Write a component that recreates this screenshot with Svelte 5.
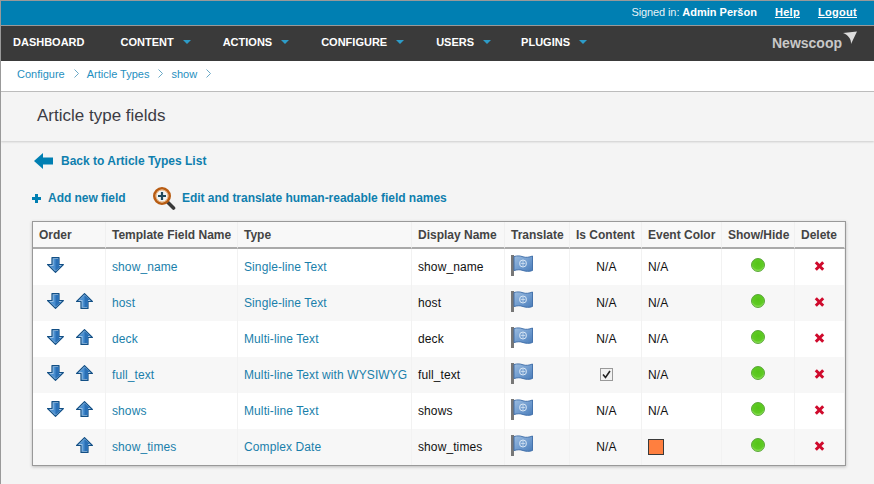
<script>
  const menuItems = [
    { label: 'DASHBOARD', arrow: false },
    { label: 'CONTENT', arrow: true },
    { label: 'ACTIONS', arrow: true },
    { label: 'CONFIGURE', arrow: true },
    { label: 'USERS', arrow: true },
    { label: 'PLUGINS', arrow: true }
  ];

  const crumbs = ['Configure', 'Article Types', 'show'];

  const columns = [
    { label: 'Order', width: 73 },
    { label: 'Template Field Name', width: 132 },
    { label: 'Type', width: 174 },
    { label: 'Display Name', width: 93 },
    { label: 'Translate', width: 65 },
    { label: 'Is Content', width: 72 },
    { label: 'Event Color', width: 80 },
    { label: 'Show/Hide', width: 73 },
    { label: 'Delete', width: 50 }
  ];

  const fields = [
    { name: 'show_name', type: 'Single-line Text', down: true, up: false },
    { name: 'host', type: 'Single-line Text', down: true, up: true },
    { name: 'deck', type: 'Multi-line Text', down: true, up: true },
    { name: 'full_text', type: 'Multi-line Text with WYSIWYG', down: true, up: true, checked: true },
    { name: 'shows', type: 'Multi-line Text', down: true, up: true },
    { name: 'show_times', type: 'Complex Date', down: false, up: true, color: '#ff7f3f' }
  ];
</script>

{#snippet arrow(direction)}
  <svg class="arrow" class:flip={direction === 'up'} width="17" height="16" viewBox="0 0 17 16">
    <path d="M5 .6h7v6.900h4.400L8.500 15.400.6 7.500H5z" fill="#9cc2e6" stroke="#124f85" stroke-width="1.200" stroke-linejoin="round" />
    <path d="M6.500 2h5.500v7h2L8.500 13.800 3.500 9h3z" fill="#4a8fd0" />
    <path d="M8.500 2H12v7h2L8.500 13.800z" fill="#2a70b6" />
  </svg>
{/snippet}

{#snippet flag()}
  <svg width="22" height="21" viewBox="0 0 22 21">
    <defs>
      <linearGradient id="flagfill" x1="0" y1="0" x2="1" y2="1">
        <stop offset="0" stop-color="#9dbde0" />
        <stop offset="0.600" stop-color="#6a97cc" />
        <stop offset="1" stop-color="#4a7cb8" />
      </linearGradient>
    </defs>
    <rect x="0" y="0" width="3" height="21" fill="#777" />
    <path d="M3 1.500C7 .5 9 .8 12 1.800S18 2.300 21.500 1V15.500C18 16.800 15 16.500 12 15.500S7 14.500 3 15.500z" fill="url(#flagfill)" stroke="#3a6aa6" stroke-width="0.900" />
    <circle cx="12" cy="8.500" r="3.500" fill="none" stroke="#d8e6f4" stroke-width="1" />
    <path d="M12 5.500v6M9.500 8.500h5" stroke="#d8e6f4" stroke-width="0.700" />
  </svg>
{/snippet}

{#snippet greenDot()}
  <svg width="14" height="14" viewBox="0 0 14 14">
    <defs>
      <radialGradient id="dot" cx="0.500" cy="0.400" r="0.620">
        <stop offset="0" stop-color="#55c318" />
        <stop offset="0.650" stop-color="#5fcb24" />
        <stop offset="1" stop-color="#a4ec70" />
      </radialGradient>
    </defs>
    <circle cx="7" cy="7" r="6.500" fill="url(#dot)" stroke="#4f9e2e" stroke-width="0.900" />
  </svg>
{/snippet}

{#snippet cross()}
  <svg width="11" height="10" viewBox="0 0 11 10">
    <path d="M1.800 1.300l7.400 7.400M9.200 1.300l-7.400 7.400" stroke="#cf0a2c" stroke-width="3" />
  </svg>
{/snippet}

<div class="page">
  <div class="topbar">
    <span class="signed">Signed in: <b>Admin Peršon</b></span>
    <a href="#help">Help</a>
    <a href="#logout">Logout</a>
  </div>

  <nav class="menu">
    {#each menuItems as item}
      <span class="menu-item">
        {item.label}
        {#if item.arrow}<i class="caret"></i>{/if}
      </span>
    {/each}
    <span class="logo">
      Newscoop
      <svg class="swoosh" width="14" height="13" viewBox="0 0 14 13">
        <path d="M0 2L14 .5 8 13C8.500 8 5 4 0 2z" fill="#ddd" />
      </svg>
    </span>
  </nav>

  <div class="breadcrumbs">
    {#each crumbs as crumb}
      <a href="#crumb">{crumb}</a>
      <svg class="chevron" width="5" height="9" viewBox="0 0 5 9">
        <path d="M.5 .5l4 4-4 4" fill="none" stroke="#5a9fc0" stroke-width="0.900" />
      </svg>
    {/each}
  </div>

  <header class="title">
    <h1>Article type fields</h1>
  </header>

  <main class="content">
    <a class="back" href="#back">
      <svg width="19" height="16" viewBox="0 0 19 16">
        <path d="M0 8L9 0v4.500h10v7H9V16z" fill="#007fb2" />
      </svg>
      Back to Article Types List
    </a>

    <div class="actions">
      <a class="add" href="#add">
        <svg width="9" height="9" viewBox="0 0 9 9">
          <path d="M3 0h3v3h3v3H6v3H3V6H0V3h3z" fill="#007fb2" />
        </svg>
        Add new field
      </a>
      <a class="edit" href="#edit">
        <svg width="23" height="23" viewBox="0 0 23 23">
          <path d="M14.500 15l6 6" stroke="#3a3a3a" stroke-width="3.600" stroke-linecap="round" />
          <circle cx="9" cy="9" r="7.700" fill="#eef3f4" stroke="#b85c12" stroke-width="2.600" />
          <circle cx="9" cy="9" r="6" fill="none" stroke="#e9a05a" stroke-width="0.800" />
          <path d="M9 5v8M5 9h8" stroke="#1f4a5c" stroke-width="2.200" />
        </svg>
        Edit and translate human-readable field names
      </a>
    </div>

    <table>
      <colgroup>
        {#each columns as col}
          <col style="width: {col.width}px" />
        {/each}
      </colgroup>
      <thead>
        <tr>
          {#each columns as col}
            <th>{col.label}</th>
          {/each}
        </tr>
      </thead>
      <tbody>
        {#each fields as field}
          <tr>
            <td class="order">
              <div class="order-slots">
                <span class="order-slot">{#if field.down}{@render arrow('down')}{/if}</span>
                <span class="order-slot">{#if field.up}{@render arrow('up')}{/if}</span>
              </div>
            </td>
            <td><a href="#field">{field.name}</a></td>
            <td><a href="#type">{field.type}</a></td>
            <td>{field.name}</td>
            <td class="translate">{@render flag()}</td>
            <td class="center is-content">
              {#if field.checked}
                <span class="checkbox">
                  <svg width="9" height="9" viewBox="0 0 9 9">
                    <path d="M1 4.500l2.500 3L8 1" fill="none" stroke="#222" stroke-width="1.600" />
                  </svg>
                </span>
              {:else}
                N/A
              {/if}
            </td>
            <td>
              {#if field.color}
                <span class="swatch" style="background: {field.color}"></span>
              {:else}
                N/A
              {/if}
            </td>
            <td class="center showhide">{@render greenDot()}</td>
            <td class="center">{@render cross()}</td>
          </tr>
        {/each}
      </tbody>
    </table>
  </main>
</div>

<style>
  :global(body) {
    margin: 0;
    background: #f4f4f4;
    overflow: hidden;
  }

  .page {
    width: 874px;
    height: 484px;
    box-sizing: border-box;
    overflow: hidden;
    font-family: "Liberation Sans", Arial, sans-serif;
    font-size: 12px;
    border-top: 1px solid #999;
    border-left: 1px solid #999;
  }

  a {
    color: #0f7fae;
    text-decoration: none;
  }

  .topbar {
    display: flex;
    justify-content: flex-end;
    align-items: center;
    gap: 18px;
    height: 25px;
    padding: 0 17px 2px 0;
    box-sizing: border-box;
    background: #007fb2;
    border-bottom: 1px solid #999;
    color: #fff;
    font-size: 11px;
  }

  .topbar a {
    color: #fff;
    font-weight: bold;
    text-decoration: underline;
    letter-spacing: 0.3px;
  }

  .signed {
    color: #e6f3f8;
    letter-spacing: -0.1px;
  }

  .signed b {
    letter-spacing: 0;
    color: #fff;
  }

  .menu {
    display: flex;
    align-items: center;
    height: 35px;
    box-sizing: border-box;
    padding: 0 0 4px 12px;
    background: #3a3a3a;
    color: #fff;
    font-size: 11px;
    font-weight: bold;
  }

  .menu-item {
    display: flex;
    align-items: center;
    margin-right: 32px;
  }

  .menu-item:first-child {
    margin-right: 36px;
  }

  .menu-item:nth-child(5) {
    margin-right: 30px;
  }

  .caret {
    width: 0;
    height: 0;
    margin-left: 9px;
    border-left: 4px solid transparent;
    border-right: 4px solid transparent;
    border-top: 4px solid #2d9cc8;
  }

  .logo {
    position: relative;
    margin-left: auto;
    margin-right: 32px;
    margin-top: 2px;
    color: #c8c8c8;
    font-size: 14px;
  }

  .swoosh {
    position: absolute;
    right: -15px;
    top: -4px;
  }

  .breadcrumbs {
    display: flex;
    align-items: center;
    height: 31px;
    box-sizing: border-box;
    padding: 0 0 5px 16px;
    background: #fff;
    border-bottom: 1px solid #bbb;
    font-size: 11px;
  }

  .breadcrumbs a {
    color: #1f8fc0;
  }

  .chevron {
    margin: 0 8px 0 9px;
  }

  .title {
    display: flex;
    align-items: center;
    height: 49px;
    padding-left: 36px;
    background: #f4f4f4;
    box-shadow: 0 1px 2px #ccc;
  }

  h1 {
    margin: 0 0 1px;
    font-size: 17px;
    font-weight: normal;
    color: #3c3c44;
  }

  .content {
    padding: 11px 0 0 31px;
  }

  .back {
    display: flex;
    align-items: center;
    gap: 8px;
    height: 18px;
    margin-left: 2px;
    font-weight: bold;
    color: #0f7fae;
  }

  .actions {
    display: flex;
    align-items: center;
    height: 24px;
    margin-top: 16px;
    font-weight: bold;
    letter-spacing: -0.03px;
  }

  .add,
  .edit {
    display: flex;
    align-items: center;
  }

  .add {
    gap: 7px;
    width: 121px;
  }

  .edit {
    gap: 6px;
  }

  table {
    width: 814px;
    margin-top: 11px;
    table-layout: fixed;
    border-collapse: separate;
    border-spacing: 0;
    border: 1px solid #999;
    box-shadow: 0 1px 3px #bbb;
    background: #fff;
    color: #111;
  }

  th {
    height: 25px;
    padding: 0 0 0 6px;
    text-align: left;
    color: #444;
    font-size: 12px;
    border-bottom: 2px solid #aaa;
    border-right: 1px solid #f0f0f0;
    background: #f8f8f8;
    white-space: nowrap;
  }

  td {
    height: 36px;
    box-sizing: border-box;
    padding: 0 0 0 6px;
    border-right: 1px solid #f2f2f2;
    white-space: nowrap;
    letter-spacing: 0.1px;
  }

  tbody tr:nth-child(even) td {
    background: #f7f7f7;
  }

  tbody tr:nth-child(odd) td {
    background: #fff;
  }

  .center {
    padding: 0;
    text-align: center;
  }

  .is-content {
    padding-left: 2px;
  }

  .translate svg {
    display: block;
    margin-top: -3px;
  }

  .showhide svg {
    display: block;
    margin: -4px auto 0;
  }

  .order {
    padding-left: 14px;
  }

  .order-slots {
    display: flex;
    gap: 12px;
    margin-top: -5px;
  }

  .order-slot {
    display: block;
    width: 17px;
    height: 16px;
  }

  .arrow {
    display: block;
  }

  .arrow.flip {
    transform: scaleY(-1);
  }

  td a {
    color: #1a7fab;
  }

  .checkbox {
    display: inline-flex;
    align-items: center;
    justify-content: center;
    width: 11px;
    height: 11px;
    border: 1px solid #999;
    background: #f2f2f2;
    vertical-align: middle;
    margin-top: -2px;
  }

  .swatch {
    display: block;
    width: 14px;
    height: 14px;
    border: 1px solid #3a3a3a;
  }
</style>
